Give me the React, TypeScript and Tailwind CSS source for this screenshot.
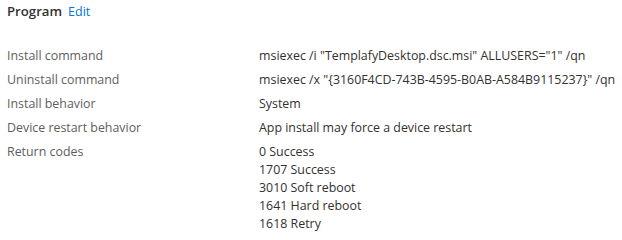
const rows: { label: string; values: string[] }[] = [
  { label: "Install command", values: ['msiexec /i "TemplafyDesktop.dsc.msi" ALLUSERS="1" /qn'] },
  { label: "Uninstall command", values: ['msiexec /x "{3160F4CD-743B-4595-B0AB-A584B9115237}" /qn'] },
  { label: "Install behavior", values: ["System"] },
  { label: "Device restart behavior", values: ["App install may force a device restart"] },
  {
    label: "Return codes",
    values: ["0 Success", "1707 Success", "3010 Soft reboot", "1641 Hard reboot", "1618 Retry"],
  },
];

export default function App() {
  return (
    <div
      className="w-[622px] h-[240px] bg-white pl-[7px] overflow-hidden"
      style={{ fontFamily: '"Open Sans", "Noto Sans", sans-serif' }}
    >
      <div className="flex items-baseline gap-[6px] h-[24px] pt-[1px]">
        <span className="text-[13.2px] font-semibold text-[#323130] leading-[20px]">Program</span>
        <span className="text-[12.5px] text-[#0078d4] leading-[20px]">Edit</span>
      </div>
      <div className="mt-[23px] grid grid-cols-[252px_1fr] gap-y-[6px] text-[12.4px] leading-[18px]">
        {rows.map((row) => (
          <div key={row.label} className="contents">
            <div className="text-[#605e5c] whitespace-nowrap">{row.label}</div>
            <div className="flex flex-col text-[#323130] whitespace-nowrap">
              {row.values.map((v) => (
                <span key={v}>{v}</span>
              ))}
            </div>
          </div>
        ))}
      </div>
    </div>
  );
}
